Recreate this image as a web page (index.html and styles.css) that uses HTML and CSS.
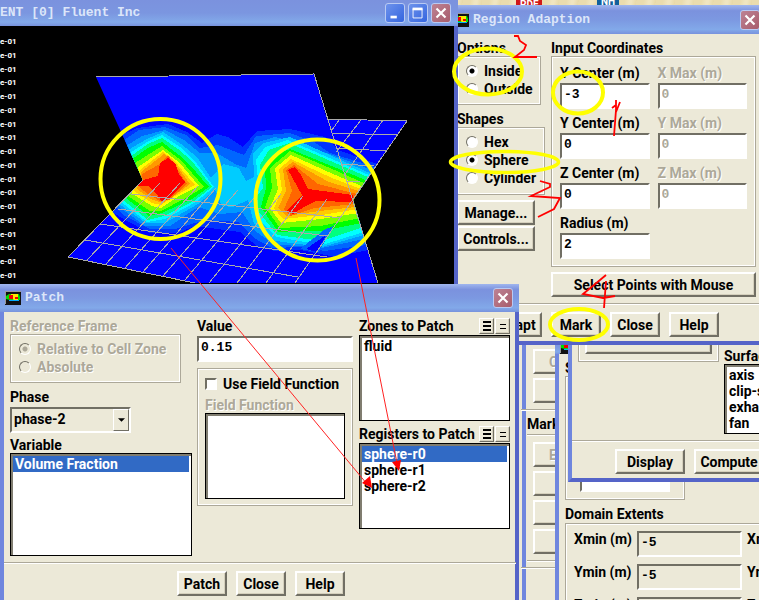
FILE: index.html
```html
<!DOCTYPE html>
<html lang="en">
<head>
<meta charset="utf-8">
<title>Fluent - Patch and Region Adaption</title>
<link rel="stylesheet" href="styles.css">
</head>
<body>
<svg width="0" height="0" class="defs" aria-hidden="true">
  <symbol id="app" viewBox="0 0 16 14">
    <path fill="#111" d="M0 0h16v14H0z"/><path fill="#999" d="M0 0h16v1H1v12H0z"/>
    <path fill="#00e000" d="M1 5l3-2h10l1 3v3H5L1 8z"/><path fill="#ffe800" d="M6 3h7v6H9L6 7z"/>
    <path fill="#f00000" d="M4 4h4v4H4zM10 6h3v2h-3z"/><path fill="#0af" d="M4 9h10v1H4z"/>
  </symbol>
  <symbol id="x" viewBox="0 0 20 20"><path d="M5 5l10 10M15 5L5 15" stroke="#fff" stroke-width="2.4"/></symbol>
</svg>
<main class="desktop">
  <span class="file pdf">PDF</span>
  <span class="file nh">NH</span>
  <div class="console"></div>

  <section class="window adapt" aria-label="Adapt">
    <div class="body">
      <div class="stack">
        <button class="wide dim">C</button>
        <button class="wide" aria-label="Limits"></button>
      </div>
      <hr>
      <h3>Mark</h3>
      <div class="stack ruled">
        <button class="wide dim">E</button>
        <button class="wide" aria-label="Invert"></button>
        <button class="wide" aria-label="Limit"></button>
        <button class="wide" aria-label="Fill"></button>
      </div>
      <hr>
    </div>
  </section>

  <section class="window grid-info" aria-label="Scale Grid">
    <header class="title"><svg class="app"><use href="#app"/></svg></header>
    <div class="body">
      <h3>Scale</h3>
      <div class="group scale"><input aria-label="Scale factor"></div>
      <h3>Domain Extents</h3>
      <div class="group extents">
        <label for="xmin">Xmin (m)</label><input id="xmin" value="-5" readonly><span>Xmax (m)</span>
        <label for="ymin">Ymin (m)</label><input id="ymin" value="-5" readonly><span>Ymax (m)</span>
        <label for="zmin">Zmin (m)</label><input id="zmin" value="-5" readonly><span>Zmax (m)</span>
      </div>
    </div>
  </section>

  <section class="window contours" aria-label="Contours">
    <div class="body">
      <div class="columns">
        <div class="group levels"><button aria-label="Options"></button></div>
        <div class="surfaces">
          <label for="surf">Surfaces</label>
          <select id="surf" class="list" multiple size="4"><option>axis</option><option>clip-surf</option><option>exhaust</option><option>fan</option></select>
        </div>
      </div>
      <hr>
      <footer><button>Display</button><button>Compute</button></footer>
    </div>
  </section>

  <section class="window region" aria-label="Region Adaption">
    <header class="title"><svg class="app"><use href="#app"/></svg><h2>Region Adaption</h2>
      <button class="cap close" aria-label="Close window"><svg><use href="#x"/></svg></button></header>
    <div class="body">
      <div class="columns">
        <div class="side">
          <h3>Options</h3>
          <div class="group short">
            <label class="choice"><input type="radio" name="where" checked>Inside</label>
            <label class="choice"><input type="radio" name="where">Outside</label>
          </div>
          <h3 class="next">Shapes</h3>
          <div class="group">
            <label class="choice"><input type="radio" name="shape">Hex</label>
            <label class="choice"><input type="radio" name="shape" checked>Sphere</label>
            <label class="choice"><input type="radio" name="shape">Cylinder</label>
          </div>
          <button class="side-button">Manage...</button>
          <button class="side-button">Controls...</button>
        </div>
        <div class="coords">
          <h3>Input Coordinates</h3>
          <div class="group fields">
            <div class="field"><label for="x1">Y Center (m)</label><input id="x1" value="-3"></div>
            <div class="field"><label class="dim" for="x2">X Max (m)</label><input id="x2" value="0" disabled></div>
            <div class="field"><label for="y1">Y Center (m)</label><input id="y1" value="0"></div>
            <div class="field"><label class="dim" for="y2">Y Max (m)</label><input id="y2" value="0" disabled></div>
            <div class="field"><label for="z1">Z Center (m)</label><input id="z1" value="0"></div>
            <div class="field"><label class="dim" for="z2">Z Max (m)</label><input id="z2" value="0" disabled></div>
            <div class="field"><label for="rad">Radius (m)</label><input id="rad" value="2"></div>
          </div>
          <button class="select-points">Select Points with Mouse</button>
        </div>
      </div>
      <hr>
      <footer><button>Adapt</button><button>Mark</button><button>Close</button><button>Help</button></footer>
    </div>
  </section>

  <section class="window fluent" aria-label="Fluent">
    <header class="title"><h2>ENT [0] Fluent Inc</h2>
      <button class="cap" aria-label="Minimize"><svg viewBox="0 0 20 20"><path fill="#fff" d="M5 13h7v3H5z"/></svg></button>
      <button class="cap" aria-label="Maximize"><svg viewBox="0 0 20 20"><path fill="none" stroke="#fff" d="M4.500 5v10.500h10V5"/><path fill="#fff" d="M4 4h11v3H4z"/></svg></button>
      <button class="cap close" aria-label="Close window"><svg><use href="#x"/></svg></button></header>
    <div class="view">
      <ol class="scale-values"><li>e-01</li><li>e-01</li><li>e-01</li><li>e-01</li><li>e-01</li><li>e-01</li><li>e-01</li><li>e-01</li><li>e-01</li><li>e-01</li><li>e-01</li><li>e-01</li><li>e-01</li><li>e-01</li><li>e-01</li><li>e-01</li><li>e-01</li><li>e-01</li></ol>
      <svg class="plot" viewBox="0 26 454 257" shape-rendering="crispEdges" role="img" aria-label="Volume fraction contours">
        <clipPath id="sil"><path id="outline" d="M96 77L314 74 327 119 407 121 353 200 378 283H195L68 257 143 180z"/></clipPath>
        <g clip-path="url(#sil)">
          <path fill="#00f" d="M0 26h454v257H0z"/>
          <path fill="#03f" d="M120 136L137 128 168 124 187 132 202 143 217 134 228 137 243 147 257 131 290 129 325 137 338 150 380 165 368 250 335 257 300 250 275 251 258 247 240 232 195 226 178 233 150 233 125 220 112 212z"/>
          <path fill="#06f" d="M124 140L139 130 165 127 186 135 200 148 218 145 244 155 256 136 290 133 314 142 330 153 375 167 366 245 325 251 300 247 272 248 254 238 238 222 205 220 175 229 150 229 125 216 116 208z"/>
          <path fill="#09f" d="M126 146L142 136 165 130 184 140 200 153 217 153 235 164 246 168 255 143 275 137 296 142 335 156 372 170 364 239 322 248 273 244 254 230 242 212 220 214 198 207 170 226 145 226 118 206z"/>
          <path fill="#0cf" d="M128 150L147 139 163 132 181 144 197 157 211 178 223 164 239 168 246 181 254 177 253 153 264 143 290 137 372 174 364 235 322 247 276 241 254 224 248 200 233 207 222 206 215 190 198 204 165 223 146 223 119 204z"/>
          <path fill="#0ff" d="M130 153L147 142 162 135 180 147 194 160 214 187 196 202 165 219 147 222 121 202zM256 160L265 147 288 140 371 176 364 232 322 245 277 237 257 218 254 195 259 190z"/>
          <path fill="#00ff80" d="M131 156L148 144 162 138 178 149 192 161 212 187 194 201 164 216 148 220 123 200zM260 165L269 150 289 143 370 178 363 227 322 241 277 235 259 212 257 196 263 188z"/>
          <path fill="#0f0" d="M132 159L148 148 162 142 179 155 189 164 209 187 192 199 162 213 149 216 126 198zM265 167L275 154 290 149 368 181 361 223 322 231 278 232 261 207 266 188z"/>
          <path fill="#7f0" d="M135 163L162 146 178 158 186 166 204 187 186 198 161 211 150 211 128 196zM270 168L290 151 330 168 366 184 360 218 321 226 280 228 265 207 272 188z"/>
          <path fill="#ff0" d="M138 167L163 150 176 160 184 168 199 186 179 196 161 208 152 206 131 193zM275 168L291 155 333 174 364 187 359 213 321 219 281 223 270 208 278 189z"/>
          <path fill="#fc0" d="M140 170L163 152 175 161 182 170 195 185 175 196 161 205 152 203 134 191zM279 169L291 159 332 178 361 189 358 209 322 215 283 219 274 208 282 190z"/>
          <path fill="#f90" d="M141 172L164 154 175 163 182 173 190 184 171 198 162 203 151 199 137 189zM283 169L293 162 329 182 359 191 356 207 319 211 287 216 278 208 286 191z"/>
          <path fill="#f60" d="M142 174L160 164 168 155 174 164 187 184 169 200 160 201 148 194 139 187zM286 170L294 165 318 184 357 194 356 204 314 208 290 216 284 209 292 191z"/>
          <path fill="red" d="M143 180L158 176 160 163 168 158 175 163 179 174 185 182 168 199 162 202 158 196 149 186 138 186zM288 170L295 167 301 175 308 189 353 195 353 202 316 201 304 207 293 214 286 211 302 195z"/>
          <path fill="#06f" d="M300 249L324 230 333 226 319 252z"/><path fill="#00f" d="M306 249L326 235 317 252z"/>
        </g>
        <g fill="none" stroke="#aaa">
          <path d="M96 77L314 74 378 283M143 180L68 257 195 283M327 119L407 121 318 250"/>
          <path d="M85 240L298 277M100 224L327 257M118 209L327 236M131 194L341 218"/>
          <path d="M87 260L160 183M105 265L180 183M124 269L198 186M143 272L216 188M163 276L238 190M185 280L258 193M209 283L281 194M237 283L303 196M266 283L327 199M295 283L318 250"/>
          <path d="M332 133L397 135M336 148L386 151M342 164L374 166M346 181L360 182M339 120L332 130M361 120L336 152M383 120L344 176"/>
        </g>
      </svg>
    </div>
  </section>

  <section class="window patch" aria-label="Patch">
    <header class="title"><svg class="app"><use href="#app"/></svg><h2>Patch</h2>
      <button class="cap close" aria-label="Close window"><svg><use href="#x"/></svg></button></header>
    <div class="body">
      <div class="columns">
        <div class="frame">
          <h3 class="dim">Reference Frame</h3>
          <div class="group short ref">
            <label class="choice dim"><input type="radio" name="ref" checked disabled>Relative to Cell Zone</label>
            <label class="choice dim"><input type="radio" name="ref" disabled>Absolute</label>
          </div>
          <label class="head next" for="phase">Phase</label>
          <div class="combo"><select id="phase"><option>phase-2</option></select><span class="arrow"><svg viewBox="0 0 8 4"><path d="M0 0h8L4 4z"/></svg></span></div>
          <label class="head" for="variable">Variable</label>
          <select id="variable" class="list variable" multiple size="6"><option selected>Volume Fraction</option></select>
        </div>
        <div class="value">
          <label class="head" for="val">Value</label>
          <input id="val" value="0.15">
          <div class="group func">
            <label class="choice"><input type="checkbox">Use Field Function</label>
            <label class="head dim" for="ff">Field Function</label>
            <select id="ff" class="list" multiple size="5"></select>
          </div>
        </div>
        <div class="targets">
          <div class="list-head"><label for="zones">Zones to Patch</label><button aria-label="Select all zones"><svg viewBox="0 0 8 10"><path d="M0 0h8v2H0zM0 4h8v2H0zM0 8h8v2H0z"/></svg></button><button aria-label="Clear zones"><svg viewBox="0 0 8 10"><path d="M1 3h6v1H1zM1 7h6v1H1z"/></svg></button></div>
          <select id="zones" class="list" multiple size="5"><option>fluid</option></select>
          <div class="list-head second"><label for="regs">Registers to Patch</label><button aria-label="Select all registers"><svg viewBox="0 0 8 10"><path d="M0 0h8v2H0zM0 4h8v2H0zM0 8h8v2H0z"/></svg></button><button aria-label="Clear registers"><svg viewBox="0 0 8 10"><path d="M1 3h6v1H1zM1 7h6v1H1z"/></svg></button></div>
          <select id="regs" class="list" multiple size="5"><option selected>sphere-r0</option><option>sphere-r1</option><option>sphere-r2</option></select>
        </div>
      </div>
      <hr>
      <footer><button>Patch</button><button>Close</button><button>Help</button></footer>
    </div>
  </section>

  <svg class="marks" width="759" height="600" aria-hidden="true">
    <g fill="none" stroke="#ff0" stroke-width="4">
      <circle cx="160.500" cy="179" r="60"/><ellipse cx="317.500" cy="200" rx="62" ry="60.500"/>
      <ellipse cx="488" cy="71.500" rx="34" ry="23"/><ellipse cx="578" cy="92.500" rx="25" ry="21"/>
      <ellipse cx="504.500" cy="162" rx="54" ry="10.500" stroke-width="3.500"/><ellipse cx="579" cy="324.500" rx="29" ry="15.500"/>
    </g>
    <g fill="none" stroke="red" stroke-width="1.800">
      <path d="M514 36l4 0 2 5 6 4-2 5-9 7 22 0M616 100l0 10-2 26M612 108l4-3M616 112l4-10M540 181l10 3 0 3-19 9 29 2-6 11-16 8M606 275l-12 10-11 9 20 4 12-2M606 281l-2 27"/>
    </g>
    <g stroke="#f22" fill="red"><path d="M171 248L367 484M356 258L397 463"/>
      <path stroke="none" d="M372 488l-2-12-8 7zM399 471l2-11-9 2z"/></g>
  </svg>
</main>
</body>
</html>
```
FILE: styles.css
```css
* { box-sizing: border-box; }
body { margin: 0; font: bold 14px/16px Roboto, "Liberation Sans", Arial, sans-serif; color: #000; }
h2, h3, hr, ol { margin: 0; padding: 0; font-size: inherit; }
button, input, select, option { font: inherit; color: inherit; margin: 0; border-radius: 0; }
.defs { position: absolute; }
.desktop { position: relative; min-height: 100vh; overflow: hidden; background: #ece9d8; }

/* desktop icons showing above the dialogs */
.desktop::before { content: ""; position: absolute; inset: 0 0 auto; height: 20px; background: repeating-linear-gradient(100deg, #eadcae 0 7px, #f0e5c0 12px 14px, #e8d9a8 19px); }
.file { position: absolute; top: -4px; height: 12px; font-size: 10px; line-height: 12px; padding: 0 4px; color: #fff; }
.pdf { left: 516px; top: -1px; background: #d01818; }
.nh { left: 597px; background: #10609c; }
.console { position: absolute; left: 0; top: 380px; bottom: 0; width: 8px; background: #fff; }

.window { position: absolute; display: flex; flex-direction: column; border: solid #6b7edb; border-width: 0 4px 4px; border-color: #7b93e2 #5564c8 #5564c8 #6f86de; background: #ece9d8; }
.title { display: flex; align-items: center; gap: 4px; margin: 0 -4px; padding: 0 5px; height: 28px; background: linear-gradient(#a0b6ee, #7b92de 20%, #7c98e1 50%, #82a9e9 85%, #7892dd); color: #dce6f9; }
.title h2 { flex: 1; font: bold 13px/16px "Liberation Mono", monospace; white-space: nowrap; }
.app { width: 16px; height: 14px; flex: none; }
.cap { flex: none; width: 20px; height: 20px; padding: 0; border: 1px solid #b9caf3; border-radius: 3px; background: linear-gradient(135deg, #6e93ec, #3465df); }
.cap svg { display: block; width: 18px; height: 18px; }
.cap.close { background: linear-gradient(135deg, #bd8294, #a85d6c); }
.body { padding: 6px; }
.columns { display: flex; align-items: flex-start; }
h3, .head { display: block; height: 16px; white-space: nowrap; }
.next { margin-top: 6px; }
.dim { color: #aca899; text-shadow: 1px 1px #fff; }
hr { border: solid; border-width: 1px 0; border-color: #aca899 #fff #fff #aca899; margin: 6px -6px 0; }
.group { border: 1px solid #aca899; outline: 1px solid #fff; outline-offset: -2px; padding: 5px 6px 7px; }
.short { padding: 5px 6px 6px; }

body button:not(.cap) { height: 25px; padding: 0 4px; border: 2px solid; border-color: #fff #716f64 #716f64 #fff; box-shadow: inset -1px -1px #d5d0bd; background: #ece9d8; white-space: nowrap; }
body button.dim { color: #aca899; }
footer { display: flex; gap: 9px; padding-top: 7px; }
footer button { min-width: 50px; }

input:not([type]) { display: block; width: 100%; height: 26px; padding: 0 2px 3px; border: 2px solid; border-color: #716f64 #fff #fff #716f64; background: #fff; font: bold 13px/16px "Liberation Mono", monospace; }
input:disabled { color: #aca899; }
.choice { display: flex; align-items: center; gap: 6px; height: 18px; white-space: nowrap; }
.choice input { appearance: none; flex: none; width: 12px; height: 12px; border: 2px solid; border-color: #716f64 #fff #fff #716f64; background: #fff; }
.choice input[type=radio] { border-width: 1px; border-radius: 50%; }
.choice input[type=radio]:checked { background: radial-gradient(circle, #000 0 2px, #fff 3px); }
.choice input[type=radio]:disabled { background: #ece9d8; }
.choice input[type=radio]:disabled:checked { background: radial-gradient(circle, #aca899 0 2px, #ece9d8 3px); }

.list { display: block; width: 100%; height: 86px; border: 1px solid #000; box-shadow: inset 2px 2px #807d70; background: #fff; overflow: hidden; padding: 2px; }
.list option { height: 16px; min-height: 16px; padding: 0 2px; line-height: 16px; }
.list option:checked { background: linear-gradient(#316ac5, #316ac5); color: #fff; }

.fluent { left: -4px; top: 0; width: 462px; height: 380px; }
.fluent .title { height: 26px; gap: 3px; padding: 0 7px 0 4px; background: linear-gradient(#7b92de, #7b96e0 50%, #82a9e9 85%, #7892dd); }
.view { position: relative; flex: 1; background: #000; }
.plot { display: block; width: 100%; }
.scale-values { position: absolute; left: 0; top: 10px; list-style: none; height: 246px; display: flex; flex-direction: column; justify-content: space-between; color: #fff; font-size: 8px; line-height: 12px; }

.region { left: 448px; top: 5px; width: 317px; }
.region .title { height: 29px; }
.region .body { padding: 6px 5px 4px; }
.region .columns { justify-content: space-between; }
.side { display: flex; flex-direction: column; align-items: flex-start; }
.side .group { width: 88px; padding-left: 8px; }
.side .short { width: 84px; }
.side-button { width: 78px; margin-top: 5px; }
.side-button + .side-button { margin-top: 1px; }
.coords { width: 205px; }
.fields { display: grid; grid-template-columns: 1fr 1fr; gap: 6px 8px; padding: 8px 8px 7px; }
.field label { display: block; height: 18px; white-space: nowrap; }
.select-points { width: 100%; margin-top: 5px; }
.region footer { padding-left: 35px; }

.patch { left: 0; top: 284px; width: 519px; }
.patch .title { padding-right: 6px; }
.patch .body { padding: 6px 5px 4px 6px; }
.patch .columns { gap: 5px; }
.frame { flex: none; width: 182px; }
.ref { width: 171px; padding-left: 8px; }
.combo { position: relative; width: 121px; margin: 2px 0 4px; }
.combo select { display: block; appearance: none; width: 100%; height: 26px; padding: 0 2px 3px; border: 2px solid; border-color: #716f64 #fff #fff #716f64; background: #ece9d8; }
.arrow { position: absolute; right: 2px; top: 2px; width: 16px; height: 22px; display: grid; place-items: center; border: 1px solid; border-color: #fff #716f64 #716f64 #fff; background: #ece9d8; pointer-events: none; }
.arrow svg { width: 7px; height: 4px; }
.variable { height: 103px; }
.value { flex: none; width: 156px; }
.value > input:not([type]) { margin: 2px 0 6px; }
.func { padding: 6px 7px; }
.func .head { margin-top: 4px; }
.targets { flex: none; width: 151px; margin-left: auto; }
.list-head { display: flex; height: 17px; gap: 1px; white-space: nowrap; }
.list-head label { flex: 1; min-width: 0; }
.list-head.second { margin-top: 5px; }
.list-head button:not(.cap) { flex: none; width: 15px; height: 16px; padding: 0; border-width: 1px; display: grid; place-items: center; }
.list-head svg { width: 8px; height: 10px; }
.patch footer { padding-left: 167px; }

.adapt { left: 522px; top: 336px; right: -100px; bottom: -10px; }
.adapt .body { padding-top: 13px; padding-left: 1px; }
.stack { display: grid; gap: 4px; padding-left: 6px; }
.ruled { border: solid #aca899; border-width: 1px 0; padding-top: 7px; padding-bottom: 6px; margin-right: -6px; box-shadow: inset 0 1px #fff, 0 1px #fff; }
.adapt h3 { margin: 5px 0 2px; }
body .wide:not(.cap) { width: 90px; padding-left: 14px; text-align: left; }
.grid-info { left: 555px; top: 340px; right: -100px; bottom: -10px; }
.scale { width: 120px; height: 124px; display: flex; align-items: flex-end; justify-content: center; }
.scale input:not([type]) { width: 90px; }
.grid-info .scale + h3 { margin-top: 6px; }
.extents { display: grid; grid-template-columns: 58px 105px 1fr; gap: 7px 5px; padding: 7px 8px; white-space: nowrap; margin-top: 1px; }
.extents input:not([type]) { background: #ece9d8; }
.contours { left: 568px; top: 300px; right: -40px; }
.contours .body { padding-bottom: 4px; }
.contours .columns { gap: 5px; }
.levels { width: 141px; height: 56px; display: flex; align-items: flex-end; }
.levels button { width: 100%; }
.surfaces { flex: 1; padding-top: 42px; }
.surfaces .list { height: 70px; }
.contours footer { padding: 7px 0 0 37px; }
.contours footer button { min-width: 70px; }

.marks { position: absolute; left: 0; top: 0; pointer-events: none; }
```
